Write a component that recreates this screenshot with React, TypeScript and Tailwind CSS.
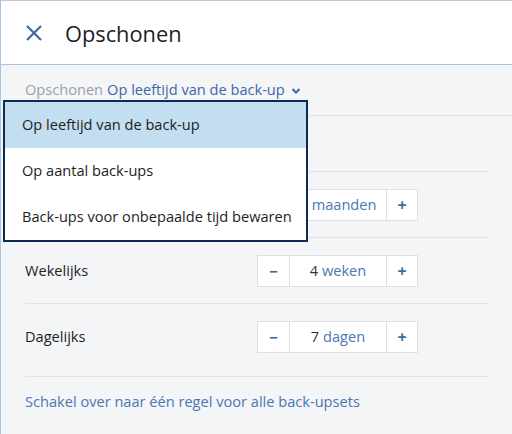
import { useState } from "react";

interface IRow {
  label: string;
  value: number;
  unit: string;
}

const options = [
  "Op leeftijd van de back-up",
  "Op aantal back-ups",
  "Back-ups voor onbepaalde tijd bewaren",
];

const Stepper: React.FC<{ value: number; unit: string }> = ({ value, unit }) => {
  return (
    <div className="flex h-[32px] w-[161px] border border-[#dde0e4] bg-white">
      <button className="w-[32px] border-r border-[#dde0e4] text-[#3d69a6] font-bold text-[15px] leading-none">
        −
      </button>
      <div className="flex-1 flex items-center justify-center text-[14.6px] text-[#4a77b4]">
        <span className="text-[#333]">{value}</span>&nbsp;{unit}
      </div>
      <button className="w-[31px] border-l border-[#dde0e4] text-[#3d69a6] font-bold text-[16px] leading-none">
        +
      </button>
    </div>
  );
};

export default function App() {
  const [open] = useState(true);
  const rows: IRow[] = [
    { label: "Maandelijks", value: 6, unit: "maanden" },
    { label: "Wekelijks", value: 4, unit: "weken" },
    { label: "Dagelijks", value: 7, unit: "dagen" },
  ];

  return (
    <div
      className="relative w-[512px] h-[434px] overflow-hidden bg-[#f4f5f7] border-l border-[#a9c3e3]"
      style={{ fontFamily: '"Open Sans", sans-serif' }}
    >
      <div className="h-[65px] bg-white border-t border-b border-t-[#c8c8c8] border-b-[#a9c3e3] flex items-center pl-[24px]">
        <svg width="18" height="18" viewBox="0 0 18 18" className="text-[#3d69a6]">
          <path d="M2 2 L16 16 M16 2 L2 16" stroke="currentColor" strokeWidth="2.2" fill="none" />
        </svg>
        <h1 className="ml-[22px] text-[21.8px] text-[#1e1e1e] leading-none pt-[2px]">Opschonen</h1>
      </div>

      <div className="h-[51px] border-b border-[#e0e2e6] flex items-center pl-[24px] text-[14.6px]">
        <span className="text-[#9aa0a8]">Opschonen</span>
        <span className="ml-[4px] text-[#3d69a6]">Op leeftijd van de back-up</span>
        <svg width="10" height="8" viewBox="0 0 10 8" className="ml-[6px] mt-[2px] text-[#3d69a6]">
          <path d="M1.5 2 L5 5.5 L8.5 2" stroke="currentColor" strokeWidth="2" fill="none" />
        </svg>
      </div>

      <div className="px-[24px]">
        <div className="h-[56px] border-b border-[#e0e2e6] flex items-center text-[14.6px] text-[#222]">
          Bewaar back-ups
        </div>
        {rows.map((row, i) => (
          <div
            key={row.label}
            className={`flex items-center justify-between w-[463px] border-b border-[#e0e2e6] pt-[17px] ${
              i === rows.length - 1 ? "pb-[23px]" : "pb-[16px]"
            }`}
          >
            <span className="text-[14.6px] text-[#1e1e1e]">{row.label}</span>
            <div className="mr-[70px]">
              <Stepper value={row.value} unit={row.unit} />
            </div>
          </div>
        ))}
        <div className="pt-[14px] text-[14.6px] text-[#4a77b4]">
          Schakel over naar één regel voor alle back-upsets
        </div>
      </div>

      {open && (
        <div className="absolute left-[2px] top-[100px] w-[305px] border-2 border-[#0c2a55] bg-white">
          {options.map((opt, i) => (
            <div
              key={opt}
              className={`h-[46px] flex items-center pl-[17px] text-[14.6px] text-[#1e1e1e] ${
                i === 0 ? "bg-[#c3ddf1]" : ""
              }`}
            >
              {opt}
            </div>
          ))}
        </div>
      )}
    </div>
  );
}
